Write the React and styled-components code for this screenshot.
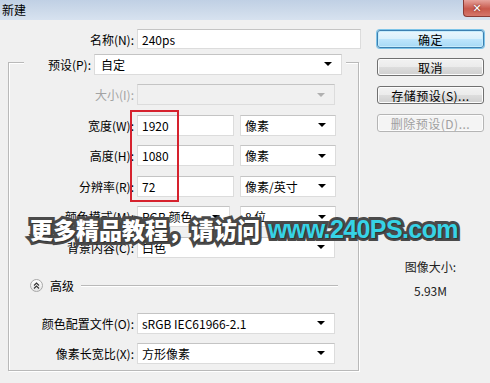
import styled, { createGlobalStyle } from 'styled-components';

const Global = createGlobalStyle`
  html, body { margin: 0; padding: 0; background: #f0f0f0; }
`;

const Window = styled.div`
  position: relative;
  width: 490px;
  height: 383px;
  overflow: hidden;
  background: #f0f0f0;
  display: flex;
  flex-direction: column;
  font-family: "Noto Sans CJK SC", "DejaVu Sans", sans-serif;
  font-size: 12px;
  color: #000;
`;

const TitleBar = styled.div`
  height: 20px;
  flex: none;
  display: flex;
  align-items: flex-start;
  justify-content: space-between;
  background: linear-gradient(#c0d0e4, #d7e2ef);
  padding-left: 2px;
`;

const Title = styled.span`
  line-height: 19px;
`;

const CloseButton = styled.div`
  width: 27px;
  height: 17px;
  box-sizing: border-box;
  border: 1px solid #8a3b35;
  border-top: none;
  border-right: none;
  border-radius: 0 0 0 4px;
  background: linear-gradient(#e6a39c, #c8584b 55%, #d5776b);
  color: #fff;
  font: bold 11px "DejaVu Sans", sans-serif;
  display: flex;
  align-items: center;
  justify-content: center;
  text-shadow: 0 0 2px #5a1a14;
`;

const Body = styled.div`
  flex: 1;
  display: flex;
`;

const Main = styled.div`
  width: 370px;
  display: flex;
  flex-direction: column;
`;

const Row = styled.div`
  display: flex;
  align-items: center;
  height: ${p => p.$height || 21}px;
  gap: 3px;
  margin-top: ${p => p.$top || 0}px;
`;

const Label = styled.span`
  width: ${p => p.$width}px;
  flex: none;
  text-align: right;
  white-space: nowrap;
  color: ${p => (p.$disabled ? '#a3a3a3' : '#000')};
`;

const Field = styled.div`
  width: ${p => p.$width}px;
  height: ${p => p.$height || 21}px;
  margin-left: ${p => p.$ml || 0}px;
  flex: none;
  box-sizing: border-box;
  display: flex;
  align-items: center;
  justify-content: space-between;
  padding: 0 9px 0 ${p => p.$pad || 4}px;
  background: ${p => (p.$disabled ? '#f0f0f0' : '#fff')};
  border: 1px solid #dcdcdc;
  border-top-color: #c4c4c4;
  white-space: nowrap;
`;

const Arrow = styled.i`
  width: 0;
  height: 0;
  border-left: 4px solid transparent;
  border-right: 4px solid transparent;
  border-top: 4px solid ${p => (p.$disabled ? '#b0b0b0' : '#000')};
`;

const Group = styled.div`
  margin: 13px 0 0 8px;
  width: 351px;
  height: 309px;
  box-sizing: border-box;
  border: 1px solid #b9b9b9;
  box-shadow: inset 1px 1px 0 #fff, 1px 1px 0 #fff;
  display: flex;
  flex-direction: column;
`;

const Legend = styled.div`
  margin: -11px 12px 0 15px;
  padding: 0 3px;
  background: #f0f0f0;
  display: flex;
  align-items: center;
  gap: 3px;
  height: 24px;
`;

const Rows = styled.div`
  margin-top: ${p => p.$top}px;
  display: flex;
  flex-direction: column;
  gap: ${p => p.$gap}px;
`;

const Advanced = styled.div`
  margin: 21px 20px 0 21px;
  height: 14px;
  display: flex;
  align-items: center;
  gap: 7px;
`;

const Toggle = styled.span`
  width: 13px;
  height: 13px;
  box-sizing: border-box;
  border-radius: 50%;
  border: 1px solid #a8a8a8;
  background: linear-gradient(#ffffff, #e4e4e4);
  display: flex;
  align-items: center;
  justify-content: center;
`;

const Rule = styled.span`
  flex: 1;
  height: 1px;
  background: #b9b9b9;
  box-shadow: 0 1px 0 #fff;
`;

const Side = styled.div`
  width: 107px;
  padding: 10px 0 0 7px;
  display: flex;
  flex-direction: column;
  gap: 10px;
`;

const Button = styled.div`
  height: 18px;
  box-sizing: border-box;
  border-radius: 3px;
  display: flex;
  align-items: center;
  justify-content: center;
  letter-spacing: 0.5px;
  border: 1px solid ${p => (p.$primary ? '#3c7fb1' : p.$disabled ? '#b5b5b5' : '#707070')};
  color: ${p => (p.$disabled ? '#a0a0a0' : '#000')};
  background: ${p =>
    p.$primary
      ? 'linear-gradient(#eaf6fd, #d9f0fc 50%, #bee6fd 51%, #a7d9f5)'
      : p.$disabled
      ? '#f4f4f4'
      : 'linear-gradient(#f2f2f2, #ebebeb 50%, #dddddd 51%, #cfcfcf)'};
  box-shadow: ${p => (p.$primary ? '0 0 0 1px #7ec4e8, inset 0 0 0 1px #c6ecfc' : 'inset 0 0 0 1px #fcfcfc')};
`;

const SizeInfo = styled.div`
  margin-top: 118px;
  display: flex;
  flex-direction: column;
  align-items: center;
  gap: 10px;
  line-height: 14px;
  color: #222;
`;

const Highlight = styled.div`
  position: absolute;
  left: 130px;
  top: 110px;
  width: 49px;
  height: 92px;
  box-sizing: border-box;
  border: 2px solid #d6222e;
`;

const Watermark = styled.div`
  position: absolute;
  left: 30px;
  top: 212px;
  display: flex;
  align-items: center;
  white-space: nowrap;
  font-weight: 900;
  line-height: 34px;
  paint-order: stroke fill;
  -webkit-text-stroke: 6px #4a4a4a;
  text-shadow: 1px 1px 1px #333;
`;

const MarkCn = styled.span`
  font-family: "Noto Sans CJK SC", sans-serif;
  font-size: 23px;
  color: #fff;
`;

const MarkUrl = styled.span`
  margin-left: 8px;
  font-family: "Liberation Sans", Arial, sans-serif;
  font-size: 25px;
  letter-spacing: -0.6px;
  color: #36d3e6;
`;

const Select = ({ width, children, disabled, pad, ml }) => (
  <Field $width={width} $disabled={disabled} $pad={pad} $ml={ml}>
    <span>{children}</span>
    <Arrow $disabled={disabled} />
  </Field>
);

const fieldRows = [
  { label: '宽度(W):', value: '1920', unit: '像素' },
  { label: '高度(H):', value: '1080', unit: '像素' },
  { label: '分辨率(R):', value: '72', unit: '像素/英寸' },
];

export default function App() {
  return (
    <Window>
      <Global />
      <TitleBar>
        <Title>新建</Title>
        <CloseButton>✕</CloseButton>
      </TitleBar>
      <Body>
        <Main>
          <Row $top={9} $height={20}>
            <Label $width={134}>名称(N):</Label>
            <Field $width={224} $height={20}>240ps</Field>
          </Row>
          <Group>
            <Legend>
              <Label $width={64}>预设(P):</Label>
              <Select width={248} pad={6}>自定</Select>
            </Legend>
            <Rows $top={8} $gap={9.5}>
              <Row>
                <Label $width={125} $disabled>大小(I):</Label>
                <Select width={198} disabled />
              </Row>
              {fieldRows.map(r => (
                <Row key={r.label}>
                  <Label $width={125}>{r.label}</Label>
                  <Field $width={97}>{r.value}</Field>
                  <Select width={96} ml={3}>{r.unit}</Select>
                </Row>
              ))}
              <Row>
                <Label $width={125}>颜色模式(M):</Label>
                <Select width={93}>RGB 颜色</Select>
                <Select width={96} ml={7}>8 位</Select>
              </Row>
              <Row>
                <Label $width={125}>背景内容(C):</Label>
                <Select width={198}>白色</Select>
              </Row>
            </Rows>
            <Advanced>
              <Toggle>
                <svg width="7" height="7" viewBox="0 0 7 7">
                  <path d="M1 3.5 L3.5 1 L6 3.5 M1 6.5 L3.5 4 L6 6.5" fill="none" stroke="#333" strokeWidth="1.1" />
                </svg>
              </Toggle>
              <span>高级</span>
              <Rule />
            </Advanced>
            <Rows $top={20} $gap={9}>
              <Row>
                <Label $width={125}>颜色配置文件(O):</Label>
                <Select width={198}>sRGB IEC61966-2.1</Select>
              </Row>
              <Row>
                <Label $width={125}>像素长宽比(X):</Label>
                <Select width={198}>方形像素</Select>
              </Row>
            </Rows>
          </Group>
        </Main>
        <Side>
          <Button $primary>确定</Button>
          <Button>取消</Button>
          <Button>存储预设(S)...</Button>
          <Button $disabled>删除预设(D)...</Button>
          <SizeInfo>
            <span>图像大小:</span>
            <span>5.93M</span>
          </SizeInfo>
        </Side>
      </Body>
      <Highlight />
      <Watermark>
        <MarkCn>更多精品教程，请访问</MarkCn>
        <MarkUrl>www.240PS.com</MarkUrl>
      </Watermark>
    </Window>
  );
}
